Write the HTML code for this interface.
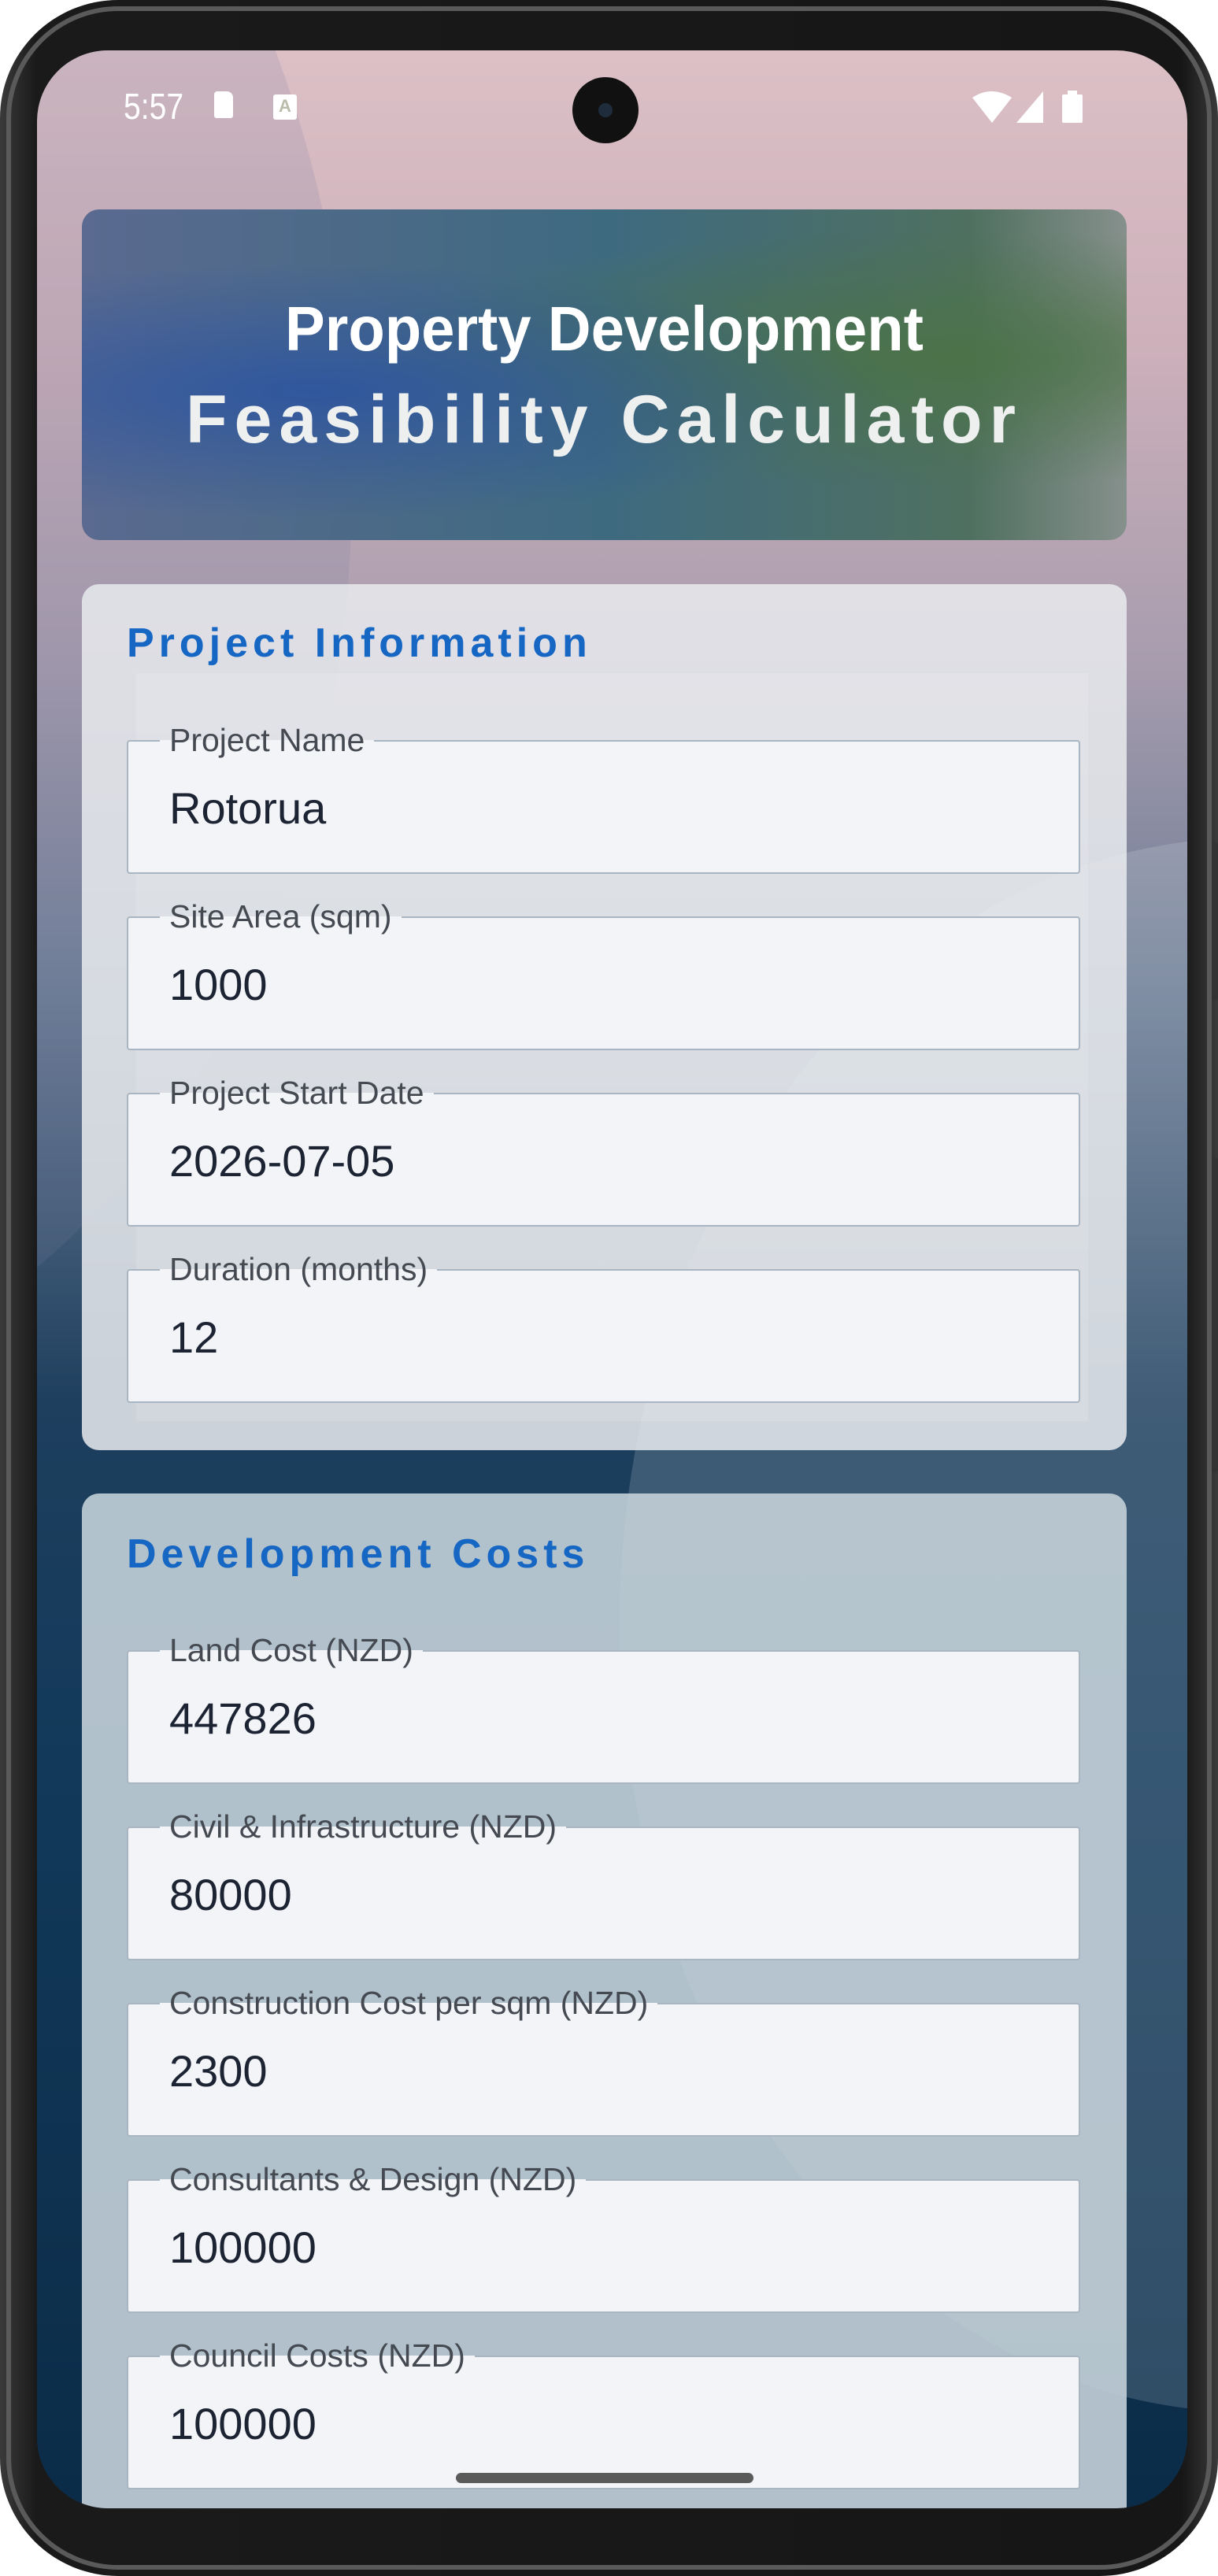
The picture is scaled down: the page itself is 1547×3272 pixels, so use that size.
<!DOCTYPE html>
<html><head><meta charset="utf-8"><style>
*{margin:0;padding:0;box-sizing:border-box}
body{width:1547px;height:3272px;background:#fff;position:relative;overflow:hidden;font-family:"Liberation Sans",sans-serif}
.phone{position:absolute;left:0;top:0;width:1547px;height:3272px;border-radius:150px;background:linear-gradient(90deg,#3a3a3a,#1a1a1a 3%,#161616 97%,#3a3a3a);}
.phone:before{content:"";position:absolute;left:8px;top:8px;right:8px;bottom:8px;border-radius:142px;border:6px solid #5a5a5a;}
.screen{position:absolute;left:47px;top:64px;width:1461px;height:3122px;border-radius:90px;overflow:hidden;
background:linear-gradient(180deg,#dcc0c6 0%,#cdb0ba 12%,#a79cae 25%,#6d7d96 38%,#1e3f5e 55%,#12395a 70%,#0b2c48 100%);}
.arc{position:absolute;border-radius:50%}
.status{position:absolute;top:0;left:0;width:100%;height:150px;color:#fff}
.time{position:absolute;left:110px;top:44px;font-size:46px;transform:scaleX(.85);transform-origin:left}
.cam{position:absolute;left:680px;top:34px;width:84px;height:84px;border-radius:50%;background:#111}
.cam:after{content:"";position:absolute;left:33px;top:33px;width:18px;height:18px;border-radius:50%;background:#1e2c3c}
.hdr{position:absolute;left:57px;top:202px;width:1327px;height:420px;border-radius:22px;overflow:hidden;
background:radial-gradient(ellipse at 22% 55%,rgba(45,85,160,.9),transparent 50%),radial-gradient(ellipse at 82% 45%,rgba(75,115,70,.9),transparent 50%),linear-gradient(90deg,#5a6a90,#3e6a80 50%,#4f7060 85%,#86908c);}
.h1{position:absolute;top:112px;width:100%;text-align:center;color:#fff;font-weight:bold;font-size:80px;transform:scaleX(.95);line-height:80px}
.h2{position:absolute;top:224px;width:100%;text-align:center;color:#eef0f0;font-weight:bold;font-size:86px;letter-spacing:9px;line-height:86px}
.card{position:absolute;left:57px;width:1327px;border-radius:22px}
.c1{top:678px;height:1100px;background:rgba(232,234,238,.86)}
.c2{top:1833px;height:1400px;background:rgba(195,208,216,.9)}
.ct{position:absolute;left:57px;color:#1666c4;font-weight:bold;font-size:52px;letter-spacing:6px;line-height:50px}
.f{position:absolute;left:57px;width:1211px;height:170px;background:#f3f4f8;border:2px solid #a9b6c2;border-radius:4px}
.lab{position:absolute;left:40px;top:-26px;padding:0 12px;font-size:41px;color:#454a52;background:linear-gradient(180deg,transparent 50%,#f3f4f8 50%);line-height:48px}
.val{position:absolute;left:52px;top:52px;font-size:56px;color:#1c2333}
.home{position:absolute;left:532px;top:3077px;width:378px;height:13px;border-radius:7px;background:#5a5a5a}
</style></head><body>
<div class="phone"></div>
<div class="screen">
  <div class="arc" style="left:-1200px;top:-600px;width:1600px;height:2300px;background:rgba(120,130,160,.18)"></div>
  <div class="arc" style="left:740px;top:1000px;width:1600px;height:2000px;background:rgba(220,225,235,.18)"></div>
  <div class="status">
    <div class="time">5:57</div>
    <div style="position:absolute;left:225px;top:52px;width:24px;height:34px;background:#fff;border-radius:4px 8px 3px 3px"></div>
    <div style="position:absolute;left:300px;top:56px;width:30px;height:32px;background:#fff;border-radius:3px;color:#bba;font-size:22px;font-weight:bold;text-align:center;line-height:30px">A</div>
    <div class="cam"></div>
    <svg style="position:absolute;left:1186px;top:50px" width="160" height="44" viewBox="0 0 160 44"><path d="M2 10 Q26 -6 52 10 L27 42Z" fill="#fff"/><path d="M58 42 L92 2 L92 42Z" fill="#fff"/><rect x="116" y="6" width="26" height="36" rx="2" fill="#fff"/><rect x="123" y="1" width="12" height="6" fill="#fff"/></svg>
  </div>
  <div class="hdr"><div class="h1">Property Development</div><div class="h2">Feasibility Calculator</div></div>
  <div class="card c1">
    <div class="ct" style="top:50px">Project Information</div>
    <div style="position:absolute;left:69px;top:113px;width:1209px;height:950px;background:rgba(255,255,255,.12)"></div>
    <div class="f" style="top:198px"><div class="lab">Project Name</div><div class="val">Rotorua</div></div>
    <div class="f" style="top:422px"><div class="lab">Site Area (sqm)</div><div class="val">1000</div></div>
    <div class="f" style="top:646px"><div class="lab">Project Start Date</div><div class="val">2026-07-05</div></div>
    <div class="f" style="top:870px"><div class="lab">Duration (months)</div><div class="val">12</div></div>
  </div>
  <div class="card c2">
    <div class="ct" style="top:52px">Development Costs</div>
    <div class="f" style="top:199px"><div class="lab">Land Cost (NZD)</div><div class="val">447826</div></div>
    <div class="f" style="top:423px"><div class="lab">Civil &amp; Infrastructure (NZD)</div><div class="val">80000</div></div>
    <div class="f" style="top:647px"><div class="lab">Construction Cost per sqm (NZD)</div><div class="val">2300</div></div>
    <div class="f" style="top:871px"><div class="lab">Consultants &amp; Design (NZD)</div><div class="val">100000</div></div>
    <div class="f" style="top:1095px"><div class="lab">Council Costs (NZD)</div><div class="val">100000</div></div>
  </div>
  <div class="home"></div>
</div>
<div style="position:absolute;left:1539px;top:1070px;width:8px;height:200px;background:#333;border-radius:3px"></div>
<div style="position:absolute;left:1539px;top:1470px;width:8px;height:400px;background:#333;border-radius:3px"></div>
</body></html>
